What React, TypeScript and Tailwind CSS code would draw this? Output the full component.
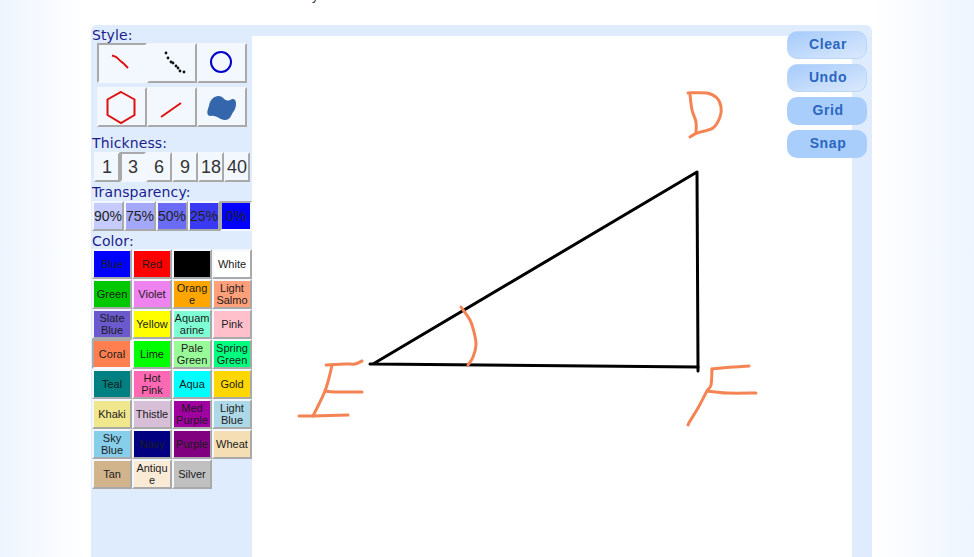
const up = "border-2 border-t-[#f4f8fe] border-l-[#f4f8fe] border-b-[#a9a9a9] border-r-[#a9a9a9]";
const down = "border-2 border-t-[#a9a9a9] border-l-[#a9a9a9] border-b-[#f4f8fe] border-r-[#f4f8fe]";

function smooth(p: number[][]) {
  let d = `M${p[0][0]} ${p[0][1]}`;
  for (let i = 0; i < p.length - 1; i++) {
    const a = p[Math.max(i - 1, 0)], b = p[i], c = p[i + 1], e = p[Math.min(i + 2, p.length - 1)];
    d += `C${b[0] + (c[0] - a[0]) / 6} ${b[1] + (c[1] - a[1]) / 6} ${c[0] - (e[0] - b[0]) / 6} ${c[1] - (e[1] - b[1]) / 6} ${c[0]} ${c[1]}`;
  }
  return d;
}

const orange = [
  [[326, 365], [345, 364], [355, 364], [362, 361]],
  [[332, 365], [329, 378], [325, 391], [319, 404], [313, 416]],
  [[325, 391], [335, 392], [362, 392]],
  [[299, 416], [313, 416], [348, 415]],
  [[461, 307], [470, 320], [474, 332], [476, 345], [473, 357], [468, 365]],
  [[688, 93], [707, 93], [717, 98], [721, 107], [720, 117], [713, 128], [697, 133], [690, 137]],
  [[690, 95], [692, 110], [696, 122], [696, 133]],
  [[749, 366], [733, 367], [712, 369]],
  [[712, 369], [711, 385], [707, 391], [698, 408], [690, 421], [688, 425]],
  [[707, 391], [727, 393], [756, 393]],
];

const styleIcons = [
  <path d="M15 12.5C18 13 20 14 22 16.5C24 19 27 20 28 22C29 23 30 24 31 25" fill="none" stroke="#dd1111" strokeWidth="2" />,
  <g fill="#111">
    {[[19, 10], [21, 15], [24, 19], [26, 20], [29, 23], [31, 25], [33, 28], [37, 29]].map(([x, y]) => (
      <circle key={x} cx={x} cy={y} r="1.4" />
    ))}
  </g>,
  <circle cx="24" cy="19" r="10" fill="none" stroke="#0000cc" strokeWidth="2" />,
  <polygon points="24,5 37.5,12.5 37.5,28 24,36 10.5,28 10.5,12.5" fill="none" stroke="#dd1111" strokeWidth="2" />,
  <line x1="14" y1="30" x2="34" y2="16" stroke="#dd1111" strokeWidth="2" />,
  <path d="M12 19C13 11 20 7 25 10C28 13 30 15 35 12C40 11 40 19 37 24C34 27 34 33 28 33C22 33 20 28 14 29C9 29 10 24 12 19Z" fill="#3366aa" />,
];

const swatches = [
  ["Blue", "bg-[#0000ff]"], ["Red", "bg-[#ff0000]"], ["Black", "bg-[#000000]"], ["White", "bg-[#ffffff]"],
  ["Green", "bg-[#00c800]"], ["Violet", "bg-[#ee82ee]"], ["Orange", "bg-[#ffa500]"], ["Light Salmon", "bg-[#ffa07a]"],
  ["Slate Blue", "bg-[#6a5acd]"], ["Yellow", "bg-[#ffff00]"], ["Aquamarine", "bg-[#7fffd4]"], ["Pink", "bg-[#ffc0cb]"],
  ["Coral", "bg-[#ff7f50]"], ["Lime", "bg-[#00ff00]"], ["Pale Green", "bg-[#98fb98]"], ["Spring Green", "bg-[#00ff7f]"],
  ["Teal", "bg-[#008080]"], ["Hot Pink", "bg-[#ff69b4]"], ["Aqua", "bg-[#00ffff]"], ["Gold", "bg-[#ffd700]"],
  ["Khaki", "bg-[#f0e68c]"], ["Thistle", "bg-[#d8bfd8]"], ["Med Purple", "bg-[#a000a0]"], ["Light Blue", "bg-[#add8e6]"],
  ["Sky Blue", "bg-[#87ceeb]"], ["Navy", "bg-[#000080]"], ["Purple", "bg-[#800080]"], ["Wheat", "bg-[#f5deb3]"],
  ["Tan", "bg-[#d2b48c]"], ["Antique", "bg-[#faebd7]"], ["Silver", "bg-[#c0c0c0]"],
];

const alphas = [
  ["90%", "bg-[#c6ccff]"], ["75%", "bg-[#a3a8fb]"], ["50%", "bg-[#6a6cf8]"], ["25%", "bg-[#3a3af2]"], ["0%", "bg-[#0000ff]"],
];

function Label({ children, low }: { children: string; low?: boolean }) {
  return (
    <div className={`h-[18px] pl-px text-[14px] leading-[19px] tracking-[0.12px] text-[#1c1c8e] font-['DejaVu_Sans',sans-serif] ${low ? "pt-px" : ""}`}>
      {children}
    </div>
  );
}

const actions = [
  ["Clear", "bg-gradient-to-br from-[#a6cbfb] to-[#dbe9fc] border border-[#bcd6f8]"],
  ["Undo", "bg-gradient-to-br from-[#a6cbfb] to-[#dbe9fc] border border-[#bcd6f8]"],
  ["Grid", "bg-[#a9cefc]"],
  ["Snap", "bg-[#a9cefc]"],
];

export default function App() {
  return (
    <div className="relative h-[557px] w-full overflow-hidden bg-[linear-gradient(90deg,#eef5fe_0px,#ffffff_85px,#ffffff_872px,#eef5fe_974px)] font-['Liberation_Sans',sans-serif] pl-[91px] pt-[25px]">
      <div className="absolute left-[312px] top-[-12px] text-[13px] leading-[15px] text-[#333]">y</div>
      <div className="flex h-[532px] w-[781px] rounded-t-[6px] bg-[#deecfd]">
        <aside className="w-[161px] shrink-0">
          <Label low>Style:</Label>
          <div className="ml-[6px] grid w-[150px] grid-cols-3 gap-y-[4px]">
            {styleIcons.map((icon, i) => (
              <button key={i} className={`relative h-[40px] w-[50px] bg-[#f3f8fe] ${i === 0 ? down : up}`}>
                <svg viewBox="0 0 50 40" className="absolute left-[-2px] top-[-2px] h-[40px] w-[50px]">{icon}</svg>
              </button>
            ))}
          </div>
          <div className="mt-[7px]"><Label>Thickness:</Label></div>
          <div className="ml-[3px] flex">
            {["1", "3", "6", "9", "18", "40"].map((t) => (
              <button key={t} className={`flex h-[30px] w-[26px] items-center justify-center bg-[#f3f8fe] text-[18px] text-[#333] ${t === "3" ? down : up}`}>{t}</button>
            ))}
          </div>
          <div className="mt-px"><Label>Transparency:</Label></div>
          <div className="ml-px flex">
            {alphas.map(([t, c]) => (
              <button key={t} className={`flex h-[30px] w-[32px] items-center justify-center whitespace-nowrap text-[14px] text-[#222] ${c} ${t === "0%" ? down : up}`}>{t}</button>
            ))}
          </div>
          <Label low>Color:</Label>
          <div className="ml-px grid w-[160px] grid-cols-4">
            {swatches.map(([n, c]) => (
              <button key={n} className={`flex h-[30px] w-[40px] items-center justify-center text-center text-[11px] leading-[12px] [overflow-wrap:anywhere] ${n === "Black" ? "text-black" : "text-[#1c1c1c]"} ${c} ${n === "Coral" ? down : up}`}>
                <span className="block max-h-[24px] w-full overflow-hidden">{n}</span>
              </button>
            ))}
          </div>
        </aside>
        <main className="mt-[11px] h-[521px] w-[600px] shrink-0 bg-white">
          <svg viewBox="252 36 600 521" className="h-[521px] w-[600px]" fill="none" strokeLinecap="round" strokeLinejoin="round">
            <g stroke="#000" strokeWidth="3">
              <path d="M370 364L373 364L697 172L698 367L373 364" />
              <path d="M698 367V371" />
            </g>
            <g stroke="#f58455" strokeWidth="3">
              {orange.map((p, i) => <path key={i} d={smooth(p)} />)}
            </g>
          </svg>
        </main>
      </div>
      <div className="absolute left-[787px] top-[31px] flex w-[80px] flex-col gap-[5px]">
        {actions.map(([t, c]) => (
          <button key={t} className={`h-[28px] rounded-[10px] pb-[2px] pl-[2px] text-center text-[14px] font-bold tracking-[0.6px] text-[#2b66c0] ${c}`}>{t}</button>
        ))}
      </div>
    </div>
  );
}
